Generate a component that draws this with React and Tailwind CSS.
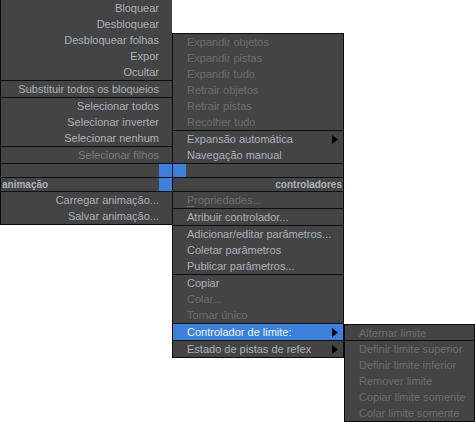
// App.jsx — quad menu recreation
const ON = 'text-[#aab2bd]';
const OFF = 'text-[#6c6c6c]';

function Line() {
  return <div className="h-px bg-[#0d0d0d]" />;
}

function Item({ label, off, dim, right, arrow, active, underline, h = 'h-4' }) {
  const color = active ? 'text-[#eef3fb]' : off ? OFF : dim ? 'text-[#7a7a7a]' : ON;
  return (
    <div
      className={`${h} flex items-center whitespace-nowrap leading-4 ${
        right ? 'justify-end pr-[13px]' : 'justify-between pl-[14px] pr-[5px]'
      } ${active ? 'bg-[#3c80dc]' : ''} ${color}`}
    >
      <span>
        {underline ? (
          <>
            <span className="underline underline-offset-2">{label[0]}</span>
            {label.slice(1)}
          </>
        ) : (
          label
        )}
      </span>
      {arrow && (
        <svg width="6" height="9" viewBox="0 0 6 9" className="shrink-0">
          <path d="M0 0 L6 4.5 L0 9 Z" fill="#000" />
        </svg>
      )}
    </div>
  );
}

function LeftMenu() {
  return (
    <div className="w-[172px] shrink-0 self-start bg-[#444444] border-l border-b border-[#0d0d0d]">
      {['Bloquear', 'Desbloquear', 'Desbloquear folhas', 'Expor', 'Ocultar'].map((t) => (
        <Item key={t} label={t} right />
      ))}
      <Line />
      <Item label="Substituir todos os bloqueios" right />
      <Line />
      {['Selecionar todos', 'Selecionar inverter', 'Selecionar nenhum'].map((t) => (
        <Item key={t} label={t} right />
      ))}
      <Line />
      <Item label="Selecionar filhos" right dim />
      <Line />
      <div className="h-[13px] flex justify-end">
        <div className="w-[13px] bg-[#3c80dc]" />
      </div>
      <Line />
      <div className="h-[13px] flex items-center justify-between">
        <span className={`pl-[1px] text-[10px] font-bold leading-none ${ON}`}>animação</span>
        <div className="w-[13px] h-[13px] bg-[#3c80dc]" />
      </div>
      <Line />
      <Item label="Carregar animação..." right />
      <Item label="Salvar animação..." right />
    </div>
  );
}

function RightMenu() {
  return (
    <div className="w-[172px] shrink-0 self-start mt-[33px] bg-[#444444] border border-[#0d0d0d]">
      {['Expandir objetos', 'Expandir pistas', 'Expandir tudo', 'Retrair objetos', 'Retrair pistas', 'Recolher tudo'].map(
        (t) => (
          <Item key={t} label={t} off />
        )
      )}
      <Line />
      <Item label="Expansão automática" arrow />
      <Item label="Navegação manual" />
      <Line />
      <div className="h-[13px] flex">
        <div className="w-[13px] bg-[#3c80dc]" />
      </div>
      <Line />
      <div className={`h-[13px] flex items-center justify-end pr-[1px] text-[10px] font-bold leading-none ${ON}`}>
        controladores
      </div>
      <Line />
      <Item label="Propriedades..." off underline />
      <Line />
      <Item label="Atribuir controlador..." />
      <Line />
      <Item label="Adicionar/editar parâmetros..." />
      <Item label="Coletar parâmetros" />
      <Item label="Publicar parâmetros..." />
      <Line />
      <Item label="Copiar" />
      <Item label="Colar..." off />
      <Item label="Tornar único" off />
      <Line />
      <Item label="Controlador de limite:" arrow active />
      <Line />
      <Item label="Estado de pistas de refex" arrow />
    </div>
  );
}

function SubMenu() {
  return (
    <div className="w-[131px] shrink-0 self-start mt-[324px] bg-[#444444] border border-[#0d0d0d]">
      <Item label="Alternar limite" off h="h-[15px]" />
      <Line />
      {[
        'Definir limite superior',
        'Definir limite inferior',
        'Remover limite',
        'Copiar limite somente',
        'Colar limite somente',
      ].map((t) => (
        <Item key={t} label={t} off />
      ))}
    </div>
  );
}

export default function App() {
  return (
    <div
      className="w-[475px] h-[423px] bg-white flex overflow-hidden text-[11px]"
      style={{ fontFamily: '"Liberation Sans", Arial, sans-serif' }}
    >
      <LeftMenu />
      <RightMenu />
      <SubMenu />
    </div>
  );
}
